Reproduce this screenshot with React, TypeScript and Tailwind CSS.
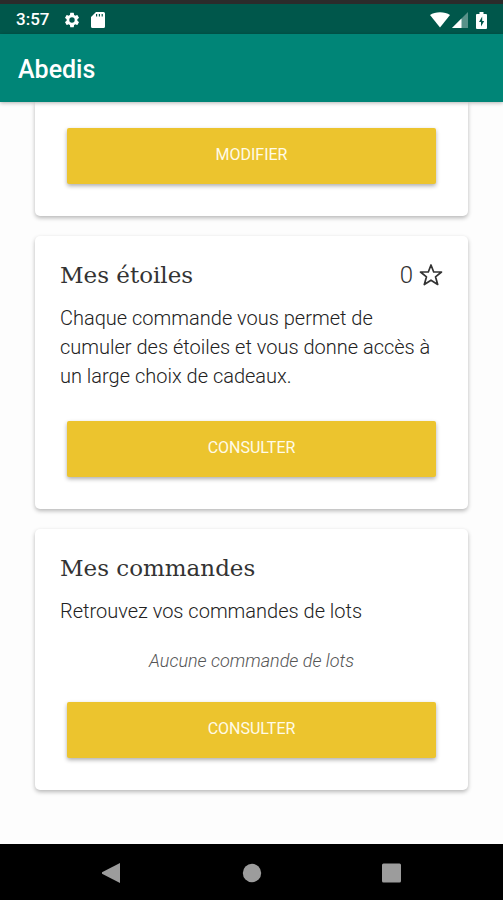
import type { ReactNode } from "react";

function StatusBar() {
  return (
    <div className="flex h-[34px] shrink-0 items-center justify-between border-t-4 border-[#2b2b2b] bg-[#00574b] px-4 pt-[2px] text-white">
      <div className="flex items-center">
        <span className="w-[47px] text-[17px] font-medium">3:57</span>
        <svg className="size-[18px]" viewBox="0 0 24 24" fill="currentColor" aria-hidden="true">
          <path d="M19.14 12.94c.04-.3.06-.61.06-.94 0-.32-.02-.64-.07-.94l2.03-1.58a.49.49 0 0 0 .12-.61l-1.92-3.32a.488.488 0 0 0-.59-.22l-2.39.96c-.5-.38-1.03-.7-1.62-.94l-.36-2.54a.484.484 0 0 0-.48-.41h-3.84c-.24 0-.43.17-.47.41l-.36 2.54c-.59.24-1.13.57-1.62.94l-2.39-.96c-.22-.08-.47 0-.59.22L2.74 8.87c-.12.21-.08.47.12.61l2.03 1.58c-.05.3-.09.63-.09.94s.02.64.07.94l-2.03 1.58a.49.49 0 0 0-.12.61l1.92 3.32c.12.22.37.29.59.22l2.39-.96c.5.38 1.03.7 1.62.94l.36 2.54c.05.24.24.41.48.41h3.84c.24 0 .44-.17.47-.41l.36-2.54c.59-.24 1.13-.56 1.62-.94l2.39.96c.22.08.47 0 .59-.22l1.92-3.32c.12-.22.07-.47-.12-.61l-2.01-1.58zM12 15.6A3.6 3.6 0 1 1 12 8.400a3.6 3.6 0 0 1 0 7.200z" />
        </svg>
        <svg className="ml-[10px] h-4 w-[14px]" viewBox="0 0 14 16" fill="currentColor" aria-hidden="true">
          <path fillRule="evenodd" d="M12.500 0H5L0 5v9.500A1.500 1.500 0 0 0 1.500 16h11a1.500 1.500 0 0 0 1.500-1.500v-13A1.500 1.500 0 0 0 12.500 0zM5 2h1.200v2.500H5zM7.800 2H9v2.500H7.800zM10.600 2h1.200v2.500h-1.200z" />
        </svg>
      </div>
      <div className="flex items-center">
        <svg className="h-4 w-5" viewBox="0 0 20 16" fill="currentColor" aria-hidden="true">
          <path d="M0 3C5-.6 15-.6 20 3L10 15.500z" />
        </svg>
        <svg className="ml-[2px] size-4" viewBox="0 0 16 16" fill="currentColor" aria-hidden="true">
          <path d="M16 0v16H0z" opacity="0.35" />
          <path d="M9.500 6.500V16H0z" />
        </svg>
        <svg className="ml-2 h-[17px] w-[11px]" viewBox="0 0 11 17" aria-hidden="true">
          <path d="M3.500 0h4v2H10a1 1 0 0 1 1 1v13a1 1 0 0 1-1 1H1a1 1 0 0 1-1-1V3a1 1 0 0 1 1-1h2.500z" fill="white" />
          <path d="M6.200 4.500 3 10h2v4.500L8.200 9H6.200z" fill="#00574b" />
        </svg>
      </div>
    </div>
  );
}

function Card({ className, children }: { className: string; children: ReactNode }) {
  return (
    <section className={`bg-white px-[25px] pb-8 shadow-[0_2px_4px_rgba(0,0,0,0.28)] ${className}`}>
      {children}
    </section>
  );
}

function CardTitle({ children }: { children: ReactNode }) {
  return (
    <h2 className="font-['Roboto_Slab','DejaVu_Serif',serif] text-[23px] leading-[38px] text-[#333]">{children}</h2>
  );
}

function ActionButton({ children }: { children: ReactNode }) {
  return (
    <div className="px-[7px]">
      <button
        type="button"
        className="block h-14 w-full rounded-[2px] bg-[#ecc42e] pb-[2px] text-base text-[#fffbe8] shadow-[0_2px_4px_rgba(0,0,0,0.32)]"
      >
        {children}
      </button>
    </div>
  );
}

export default function App() {
  return (
    <div className="flex h-screen flex-col bg-[#fdfdfd] font-[Roboto,sans-serif]">
      <StatusBar />
      <header className="z-10 flex h-[68px] shrink-0 items-center bg-[#008577] px-[18px] pt-[3px] shadow-[0_1px_4px_rgba(0,0,0,0.3)]">
        <h1 className="text-[25px] font-medium text-white">Abedis</h1>
      </header>

      <main className="flex min-h-0 flex-1 flex-col gap-5 overflow-hidden px-[35px]">
        <Card className="rounded-b-[5px] pt-[26px]">
          <ActionButton>MODIFIER</ActionButton>
        </Card>

        <Card className="rounded-[5px] pt-5">
          <div className="flex items-center justify-between">
            <CardTitle>Mes étoiles</CardTitle>
            <div className="flex items-center gap-[6px] text-[#333]">
              <span className="text-2xl font-light">0</span>
              <svg className="size-6" viewBox="0 0 24 24" fill="none" stroke="currentColor" strokeWidth="1.700" strokeLinejoin="round" role="img" aria-label="étoiles">
                <path d="M12 2 14.700 9H22.500l-6 4.800 2.200 7.700L12 17.200l-6.700 4.300 2.200-7.700L1.500 9h7.800z" />
              </svg>
            </div>
          </div>
          <p className="mt-[10px] mb-[30px] text-xl leading-[29px] font-light text-[#222]">
            Chaque commande vous permet de cumuler des étoiles et vous donne accès à un large choix de cadeaux.
          </p>
          <ActionButton>CONSULTER</ActionButton>
        </Card>

        <Card className="rounded-[5px] pt-5">
          <CardTitle>Mes commandes</CardTitle>
          <p className="mt-[10px] text-xl leading-[29px] font-light text-[#222]">Retrouvez vos commandes de lots</p>
          <p className="mt-5 mb-[27px] text-center text-lg leading-[29px] font-light text-[#555] italic">
            Aucune commande de lots
          </p>
          <ActionButton>CONSULTER</ActionButton>
        </Card>
      </main>

      <nav aria-label="Navigation" className="flex h-14 shrink-0 items-center justify-center gap-[120px] bg-black pt-[2px] text-[#9c9c9c]">
        <button type="button" aria-label="Retour">
          <svg className="size-5" viewBox="0 0 20 20" fill="currentColor">
            <path d="M18 0v20L0 10.800a1 1 0 0 1 0-1.600z" />
          </svg>
        </button>
        <button type="button" aria-label="Accueil">
          <svg className="size-5" viewBox="0 0 20 20" fill="currentColor">
            <circle cx="10" cy="10" r="9.200" />
          </svg>
        </button>
        <button type="button" aria-label="Applications récentes">
          <svg className="size-5" viewBox="0 0 20 20" fill="currentColor">
            <rect width="19" height="19" y="0.500" rx="1.500" />
          </svg>
        </button>
      </nav>
    </div>
  );
}
